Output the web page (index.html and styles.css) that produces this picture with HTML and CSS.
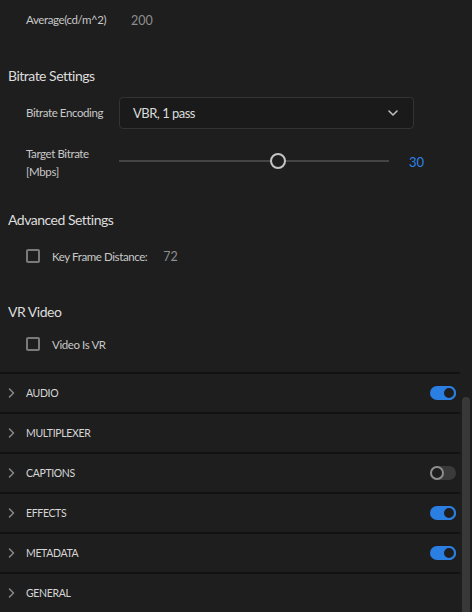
FILE: index.html
```html
<!DOCTYPE html>
<html>
<head>
<meta charset="utf-8">
<link rel="stylesheet" href="styles.css">
</head>
<body>
<div class="panel">
  <div class="settings">
    <div class="field avg">
      <span class="label">Average(cd/m^2)</span>
      <span class="value">200</span>
    </div>

    <h2 class="heading h-bitrate">Bitrate Settings</h2>
    <div class="field select-field">
      <span class="label">Bitrate Encoding</span>
      <div class="select">
        <span>VBR, 1 pass</span>
        <svg class="select-chevron" width="10" height="6" viewBox="0 0 10 6"><path d="M1 1 L5 5 L9 1" fill="none" stroke="#bdbdbd" stroke-width="1.6" stroke-linecap="round" stroke-linejoin="round"/></svg>
      </div>
    </div>
    <div class="field slider-field">
      <span class="label">Target Bitrate<br>[Mbps]</span>
      <div class="slider">
        <div class="track"></div>
        <div class="thumb"></div>
      </div>
      <span class="slider-value">30</span>
    </div>

    <h2 class="heading h-advanced">Advanced Settings</h2>
    <div class="check check-key">
      <span class="box"></span>
      <span class="check-label">Key Frame Distance:</span>
      <span class="value">72</span>
    </div>

    <h2 class="heading h-vr">VR Video</h2>
    <div class="check check-vr">
      <span class="box"></span>
      <span class="check-label">Video Is VR</span>
    </div>
  </div>

  <div class="sections">
    <div class="row"><svg class="chev" width="7" height="10" viewBox="0 0 7 10"><path d="M1.5 1 L5.5 5 L1.5 9" fill="none" stroke="#8a8a8a" stroke-width="1.5" stroke-linecap="round" stroke-linejoin="round"/></svg><span class="row-title">AUDIO</span><span class="toggle on"><span class="knob"></span></span></div>
    <div class="row"><svg class="chev" width="7" height="10" viewBox="0 0 7 10"><path d="M1.5 1 L5.5 5 L1.5 9" fill="none" stroke="#8a8a8a" stroke-width="1.5" stroke-linecap="round" stroke-linejoin="round"/></svg><span class="row-title">MULTIPLEXER</span></div>
    <div class="row"><svg class="chev" width="7" height="10" viewBox="0 0 7 10"><path d="M1.5 1 L5.5 5 L1.5 9" fill="none" stroke="#8a8a8a" stroke-width="1.5" stroke-linecap="round" stroke-linejoin="round"/></svg><span class="row-title">CAPTIONS</span><span class="toggle off"><span class="knob"></span></span></div>
    <div class="row"><svg class="chev" width="7" height="10" viewBox="0 0 7 10"><path d="M1.5 1 L5.5 5 L1.5 9" fill="none" stroke="#8a8a8a" stroke-width="1.5" stroke-linecap="round" stroke-linejoin="round"/></svg><span class="row-title">EFFECTS</span><span class="toggle on"><span class="knob"></span></span></div>
    <div class="row"><svg class="chev" width="7" height="10" viewBox="0 0 7 10"><path d="M1.5 1 L5.5 5 L1.5 9" fill="none" stroke="#8a8a8a" stroke-width="1.5" stroke-linecap="round" stroke-linejoin="round"/></svg><span class="row-title">METADATA</span><span class="toggle on"><span class="knob"></span></span></div>
    <div class="row last"><svg class="chev" width="7" height="10" viewBox="0 0 7 10"><path d="M1.5 1 L5.5 5 L1.5 9" fill="none" stroke="#8a8a8a" stroke-width="1.5" stroke-linecap="round" stroke-linejoin="round"/></svg><span class="row-title">GENERAL</span></div>
  </div>

  <div class="scrollbar"></div>
</div>
</body>
</html>
```

FILE: styles.css
```css
html, body {
  margin: 0;
  padding: 0;
  background: #1e1e1e;
}

body {
  font-family: Lato, "Open Sans", sans-serif;
  color: #c8c8c8;
  width: 472px;
  height: 612px;
  overflow: hidden;
}

.panel {
  position: relative;
  height: 612px;
}

.settings {
  display: flex;
  flex-direction: column;
  width: 460px;
}

.field {
  display: flex;
  align-items: center;
  padding-left: 26px;
}

.label {
  width: 93px;
  flex: none;
  font-size: 11.5px;
  letter-spacing: -0.4px;
  line-height: 18px;
  color: #c8c8c8;
}

.value {
  font-size: 12.5px;
  color: #8f8f8f;
}

.avg {
  height: 40px;
}

.avg .label {
  width: 105px;
}

.heading {
  margin: 0;
  padding-left: 8px;
  height: 20px;
  line-height: 20px;
  font-size: 14px;
  letter-spacing: -0.5px;
  font-weight: normal;
  color: #dcdcdc;
}

.h-bitrate { margin-top: 26px; }
.h-advanced { margin-top: 29px; }
.h-vr { margin-top: 36px; }

.select-field {
  margin-top: 11px;
  height: 32px;
}

.select {
  box-sizing: border-box;
  width: 295px;
  height: 32px;
  display: flex;
  align-items: center;
  justify-content: space-between;
  padding: 0 15px 0 13px;
  background: #1a1a1a;
  border: 1px solid #333333;
  border-radius: 4px;
  font-size: 13px;
  letter-spacing: -0.5px;
  color: #dadada;
}

.slider-field {
  margin-top: 16px;
  align-items: flex-start;
}

.slider {
  position: relative;
  width: 270px;
  height: 16px;
  margin-top: 8px;
}

.track {
  position: absolute;
  left: 0;
  right: 0;
  top: 7px;
  height: 2px;
  background: #444444;
}

.thumb {
  position: absolute;
  left: 151px;
  top: 0;
  box-sizing: border-box;
  width: 16px;
  height: 16px;
  border: 2px solid #c4c4c4;
  border-radius: 50%;
  background: #1e1e1e;
}

.slider-value {
  margin-left: 20px;
  margin-top: 8px;
  font-size: 13px;
  line-height: 18px;
  color: #2b84e8;
}

.check {
  display: flex;
  align-items: center;
  height: 20px;
  padding-left: 26px;
  font-size: 11.5px;
  letter-spacing: -0.4px;
  color: #c8c8c8;
}

.check .value {
  letter-spacing: 0;
}

.check-key { margin-top: 16px; }
.check-vr { margin-top: 12px; }

.box {
  box-sizing: border-box;
  width: 14px;
  height: 14px;
  border: 2px solid #7a7a7a;
  border-radius: 2px;
  margin-right: 12px;
  flex: none;
}

.check-label {
  margin-right: 16px;
}

.sections {
  margin-top: 18px;
  width: 460px;
}

.row {
  display: flex;
  align-items: center;
  height: 38px;
  border-top: 2px solid #121212;
  padding-right: 4px;
}

.chev {
  margin-left: 8px;
  margin-right: 11px;
  flex: none;
}

.row-title {
  flex: 1;
  font-size: 10.5px;
  letter-spacing: -0.35px;
  color: #d6d6d6;
}

.toggle {
  position: relative;
  width: 26px;
  height: 14px;
  border-radius: 7px;
  flex: none;
}

.toggle.on {
  background: #2b7fe3;
}

.toggle.off {
  background: #3a3a3a;
}

.knob {
  position: absolute;
  top: 0;
  box-sizing: border-box;
  width: 14px;
  height: 14px;
  border-radius: 50%;
  background: #1e1e1e;
}

.toggle.on .knob {
  right: 0;
  border: 2px solid #2b7fe3;
}

.toggle.off .knob {
  left: 0;
  border: 2px solid #8e8e8e;
}

.scrollbar {
  position: absolute;
  left: 462px;
  top: 397px;
  width: 8px;
  height: 230px;
  border-radius: 4px;
  background: #383838;
}
```
